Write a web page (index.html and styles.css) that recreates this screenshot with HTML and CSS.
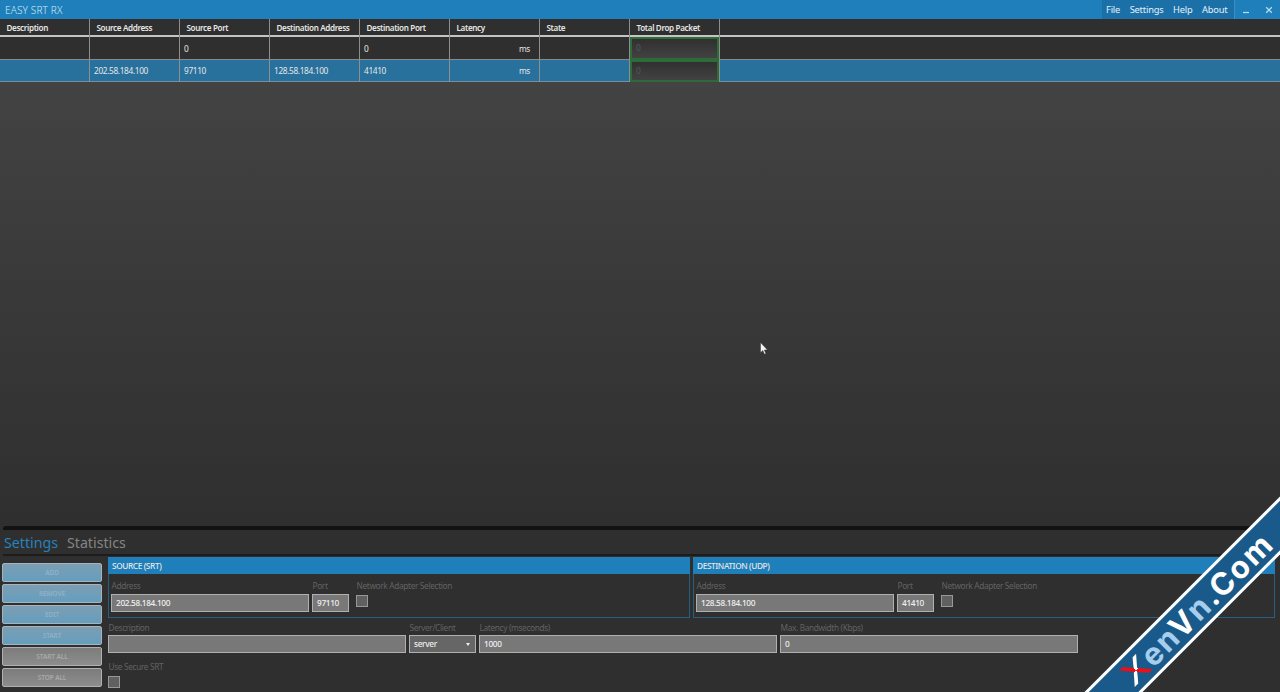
FILE: index.html
```
<!DOCTYPE html>
<html lang="en">
<head>
    <meta charset="UTF-8">
    <meta name="viewport" content="width=device-width, initial-scale=1.0">
    <title>EASY SRT RX</title>
    <link rel="stylesheet" href="styles.css">
</head>
<body>
    <div class="window">
        <header class="titlebar">
            <h1>EASY SRT RX</h1>
            <nav class="menu">
                <span>File</span>
                <span>Settings</span>
                <span>Help</span>
                <span>About</span>
            </nav>
            <div class="window-buttons">
                <svg class="minimize" viewBox="0 0 8 8"><path d="M1 6.5h6" /></svg>
                <svg class="close" viewBox="0 0 8 8"><path d="M1.2 1.2l5.6 5.6M6.8 1.2L1.2 6.8" /></svg>
            </div>
        </header>

        <main class="streams">
            <div class="row head">
                <div>Description</div>
                <div>Source Address</div>
                <div>Source Port</div>
                <div>Destination Address</div>
                <div>Destination Port</div>
                <div>Latency</div>
                <div>State</div>
                <div>Total Drop Packet</div>
            </div>
            <div class="row">
                <div></div>
                <div></div>
                <div>0</div>
                <div></div>
                <div>0</div>
                <div class="unit">ms</div>
                <div></div>
                <div class="drop"><span>0</span></div>
            </div>
            <div class="row selected">
                <div></div>
                <div>202.58.184.100</div>
                <div>97110</div>
                <div>128.58.184.100</div>
                <div>41410</div>
                <div class="unit">ms</div>
                <div></div>
                <div class="drop"><span>0</span></div>
            </div>
        </main>

        <section class="bottom">
            <div class="tabs">
                <span class="tab active">Settings</span>
                <span class="tab">Statistics</span>
            </div>
            <div class="settings">
                <div class="actions">
                    <button class="blue">ADD</button>
                    <button class="blue">REMOVE</button>
                    <button class="blue">EDIT</button>
                    <button class="blue">START</button>
                    <button>START ALL</button>
                    <button>STOP ALL</button>
                </div>
                <div class="form">
                    <div class="groups">
                        <div class="group">
                            <h2>SOURCE (SRT)</h2>
                            <div class="fields">
                                <div class="field address"><label>Address</label><div class="input">202.58.184.100</div></div>
                                <div class="field port"><label>Port</label><div class="input">97110</div></div>
                                <div class="field adapter"><label>Network Adapter Selection</label><div class="check"></div></div>
                            </div>
                        </div>
                        <div class="group">
                            <h2>DESTINATION (UDP)</h2>
                            <div class="fields">
                                <div class="field address"><label>Address</label><div class="input">128.58.184.100</div></div>
                                <div class="field port"><label>Port</label><div class="input">41410</div></div>
                                <div class="field adapter"><label>Network Adapter Selection</label><div class="check"></div></div>
                            </div>
                        </div>
                    </div>
                    <div class="fields options">
                        <div class="field wide"><label>Description</label><div class="input"></div></div>
                        <div class="field mode"><label>Server/Client</label><div class="input select">server<i></i></div></div>
                        <div class="field wide"><label>Latency (mseconds)</label><div class="input">1000</div></div>
                        <div class="field wide"><label>Max. Bandwidth (Kbps)</label><div class="input">0</div></div>
                    </div>
                    <div class="field secure"><label>Use Secure SRT</label><div class="check"></div></div>
                </div>
            </div>
        </section>

        <svg class="cursor" viewBox="0 0 8 13"><path d="M.5.5v10.2l2.3-2.2 1.6 3.7 1.5-.7-1.6-3.5h3.2z" /></svg>

        <div class="ribbon">
            <div class="ribbon-text"><span class="x">X</span><span class="light">en</span>V<span class="light">n</span>.Com</div>
        </div>
    </div>
</body>
</html>
```
FILE: styles.css
```
* {
    margin: 0;
    padding: 0;
    box-sizing: border-box;
}

body {
    font-family: 'Noto Sans', 'Open Sans', sans-serif;
    font-size: 8.3px;
    letter-spacing: -.35px;
    color: #e6e6e6;
    background: #2f2f2f;
}

.window {
    position: relative;
    width: 1280px;
    height: 692px;
    display: flex;
    flex-direction: column;
    overflow: hidden;
}

/* title bar */
.titlebar {
    height: 19px;
    flex: none;
    display: flex;
    background: #1e7fba;
}

.titlebar h1 {
    flex: 1;
    padding-left: 5px;
    font-size: 10px;
    font-weight: 300;
    letter-spacing: .15px;
    line-height: 20px;
    color: #cfeaf8;
}

.menu {
    display: flex;
    gap: 9.6px;
    width: 133px;
    padding-left: 4px;
    background: #1b70a8;
    border-right: 1px solid #3b8fc4;
    font-size: 9.3px;
    letter-spacing: -.2px;
    line-height: 19px;
    color: #e4f2fa;
}

.window-buttons {
    display: flex;
    align-items: center;
    gap: 15px;
    width: 45px;
    padding-left: 7px;
}

.window-buttons svg {
    width: 8px;
    height: 8px;
    fill: none;
    stroke: #b5dbf1;
    stroke-width: 1.3;
}

/* stream table */
.streams {
    height: 507px;
    flex: none;
    background: linear-gradient(#434343 12%, #3a3a3a 50%, #2f2f2f);
}

.row {
    display: grid;
    grid-template-columns: repeat(8, 90px);
    height: 22px;
    background: #2f2f2f;
    border-bottom: 1px solid #8a8a8a;
    line-height: 22px;
}

.row > div {
    padding-left: 4px;
    border-right: 1px solid #8e8e8e;
    white-space: nowrap;
}

.row.head {
    height: 18px;
    border-bottom: 2px solid #c4c4c4;
    font-size: 8.1px;
    font-weight: 600;
    line-height: 18px;
}

.row.head > div {
    padding-left: 6.5px;
}

.row:nth-child(2) {
    height: 23px;
    line-height: 23px;
}

.row.selected {
    background: #28719d;
    border-color: #7390a1;
}

.row .unit {
    padding-right: 9px;
    text-align: right;
}

.row > .drop {
    padding: 0;
}

.drop span {
    display: block;
    height: 100%;
    padding-left: 4px;
    border: 2px solid #2d6b38;
    background: linear-gradient(#303030, #424242);
    line-height: 18px;
    color: #565656;
}

/* bottom area */
.bottom {
    flex: 1;
    background: #2f2f2f;
}

.tabs {
    height: 30px;
    margin-left: 3px;
    border-top: 4px solid #121212;
    border-bottom: 2px solid #1c1c1c;
    border-top-left-radius: 3px;
    display: flex;
    gap: 9px;
    padding-left: 1px;
    font-size: 14.2px;
    letter-spacing: 0;
    line-height: 26px;
    color: #858585;
}

.tab.active {
    color: #2583bd;
}

.settings {
    display: flex;
    gap: 6px;
    padding: 1px 5px 0 2px;
}

.actions {
    width: 100px;
    padding-top: 6px;
    display: flex;
    flex-direction: column;
    gap: 2px;
}

.actions button {
    height: 19px;
    border: 1px solid #b0b0b0;
    border-radius: 2px;
    background: linear-gradient(#7c7c7c, #8d8d8d);
    font: 600 6.5px 'Noto Sans', sans-serif;
    letter-spacing: -.1px;
    color: #aaa;
}

.actions .blue {
    border-color: #a7b4bc;
    background: linear-gradient(#7c9eb2, #659ebf);
    color: #8fb3c8;
}

.form {
    flex: 1;
}

.groups {
    display: flex;
    gap: 3px;
}

.group {
    flex: 1;
    height: 61px;
    border: 1px solid #285f7e;
}

.group h2 {
    height: 17px;
    margin: -1px -1px 0;
    padding-left: 4px;
    background: #1e7fba;
    font-size: 8.3px;
    font-weight: 500;
    letter-spacing: -.4px;
    line-height: 18px;
}

.fields {
    display: flex;
    gap: 3px;
}

.group .fields {
    padding: 6px 2px 0;
}

.field label {
    display: block;
    height: 14px;
    padding-left: .5px;
    line-height: 12px;
    white-space: nowrap;
    color: #626262;
}

.address {
    width: 198px;
}

.port {
    width: 37px;
}

.adapter {
    margin-left: 4px;
}

.adapter .check {
    margin-top: 1px;
}

.input {
    height: 18px;
    padding-left: 4px;
    border: 1px solid #b0b0b0;
    background: #787878;
    font-weight: 500;
    line-height: 16px;
    color: #f0f0f0;
}

.options {
    padding-top: 4px;
}

.options label {
    height: 13px;
}

.wide {
    width: 298px;
}

.mode {
    width: 67px;
}

.select {
    display: flex;
    justify-content: space-between;
    align-items: center;
    padding-right: 5px;
    background: #666;
}

.select i {
    border: 2.5px solid transparent;
    border-top: 3px solid #eee;
    border-bottom: 0;
}

.check {
    width: 12px;
    height: 12px;
    border: 1px solid #989898;
    background: #606060;
}

.secure {
    padding-top: 8px;
}

.secure .check {
    margin-top: 1px;
}

/* mouse pointer */
.cursor {
    position: absolute;
    left: 760px;
    top: 342px;
    width: 8px;
    height: 13px;
    fill: #f4f4f4;
    stroke: #222;
    stroke-width: .4;
}

/* corner ribbon */
.ribbon {
    position: absolute;
    left: 1002px;
    top: 583px;
    width: 400px;
    height: 41px;
    border: solid #fff;
    border-width: 3px 0;
    background: #1a5a8a;
    transform: rotate(-45deg);
}

.ribbon-text {
    width: max-content;
    margin-left: 95px;
    font: 700 31px/36px Inter, sans-serif;
    letter-spacing: 1.9px;
    color: #fff;
}

.ribbon-text .light {
    color: #a5cdee;
}

/* X with one red and one white stroke */
.ribbon-text .x {
    display: inline-block;
    margin-right: 3px;
    background: conic-gradient(#fff 25%, #f50b12 0 50%, #fff 0 75%, #f50b12 0);
    -webkit-background-clip: text;
    background-clip: text;
    color: transparent;
    font-weight: 500;
    letter-spacing: 0;
    transform: scaleX(1.25);
}
```
